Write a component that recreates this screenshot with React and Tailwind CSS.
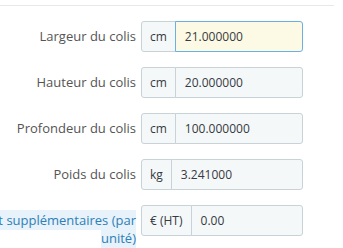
import React from 'react'

// Champs de dimensions du colis
const ROWS = [
  { label: 'Largeur du colis', unit: 'cm', value: '21.000000', focused: true },
  { label: 'Hauteur du colis', unit: 'cm', value: '20.000000' },
  { label: 'Profondeur du colis', unit: 'cm', value: '100.000000' },
  { label: 'Poids du colis', unit: 'kg', value: '3.241000' },
  { label: 'Coût supplémentaires (par unité)', unit: '€ (HT)', value: '0.00', link: true },
]

function Row({ label, unit, value, focused, link }) {
  return (
    <div className="flex items-start h-[31px]">
      <div className="w-[175px] ml-[-34px] shrink-0 text-right pr-[5px] pt-[6px] text-[13px] leading-[18px]">
        {link ? (
          <span className="text-[#2d7fb8] bg-[#e7f2fa] py-[1px] [box-decoration-break:clone]">{label}</span>
        ) : (
          <span className="text-[#555555]">{label}</span>
        )}
      </div>
      <div className="flex h-[31px] w-[162px] shrink-0">
        <span className="flex items-center px-[8px] text-[12px] text-[#363a41] bg-[#f5f8f9] border border-[#c7d3d7] rounded-l-[3px] whitespace-nowrap">
          {unit}
        </span>
        <span
          className={`flex-1 flex items-center pl-[9px] text-[12px] text-[#363a41] border rounded-r-[3px] ml-[-1px] ${
            focused ? 'bg-[#fcfae4] border-[#6ab0e3]' : 'bg-[#f5f8f9] border-[#c7d3d7]'
          }`}
        >
          {value}
        </span>
      </div>
    </div>
  )
}

export default function App() {
  return (
    <div className="w-[343px] h-[248px] bg-white overflow-hidden" style={{ fontFamily: '"Open Sans", sans-serif' }}>
      <div className="h-[5px]" />
      <div className="border-t border-[#e8e8e8] w-[334px]" />
      <div className="flex flex-col gap-[15px] pt-[15px]">
        {ROWS.map((r) => (
          <Row key={r.label} {...r} />
        ))}
      </div>
    </div>
  )
}
